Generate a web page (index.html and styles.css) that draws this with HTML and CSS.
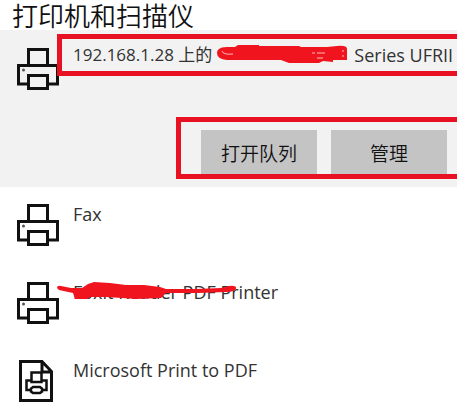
FILE: index.html
```
<!DOCTYPE html>
<html lang="zh-CN">
<head>
  <meta charset="UTF-8">
  <meta name="viewport" content="width=device-width, initial-scale=1.0">
  <title>打印机和扫描仪</title>
  <link rel="stylesheet" href="styles.css">
</head>
<body>
  <svg class="defs" aria-hidden="true">
    <symbol id="printer" viewBox="0 0 42 42">
      <path d="M11.5 17V1.5h19V17M11 36H1.5V17.5h39V36H31M11.5 27.5h19v13h-19z"/>
      <circle cx="6.500" cy="22" r="1.500" fill="#555" stroke="none"/>
    </symbol>
  </svg>

  <h1>打印机和扫描仪</h1>

  <ul class="devices">
    <li class="device selected">
      <svg class="icon"><use href="#printer"/></svg>
      <div class="details">
        <div class="mark name-mark">
          <span class="address">192.168.1.28 上的</span>
          <svg class="redacted" viewBox="0 0 132 20">
            <path class="ink" d="M2 4Q4 2 10 2L18 2 21 0H42V1H82L84 2H110L120 1Q130 0 130 4V15H116V17L106 16 102 18H72L64 15H10Q0 14 0 8Q0 5 2 4z"/>
            <path class="gap" d="M5 6Q6 10 16 9M95 8h3M100 8h8M100 13h6M126 5v2M126 10v2"/>
          </svg>
          <span>Series UFRII</span>
        </div>
        <div class="mark actions">
          <button type="button">打开队列</button>
          <button type="button">管理</button>
        </div>
      </div>
    </li>
    <li class="device">
      <svg class="icon"><use href="#printer"/></svg>
      <span class="name">Fax</span>
    </li>
    <li class="device">
      <svg class="icon"><use href="#printer"/></svg>
      <span class="name">Foxit Reader PDF Printer
        <svg class="scribble" viewBox="0 0 182 20">
          <path class="ink" d="M1 6Q1 3 5 4L15 6 26 6 32 2 38 0 54 1 70 3 88 3 104 5 110 7 140 7 165 6 173 4Q181 3 180 7Q178 10 170 10L142 11 110 11 105 16 80 17 66 16 50 15 34 15 32 17 19 17 17 11 3 8z"/>
        </svg>
      </span>
    </li>
    <li class="device">
      <svg class="icon" viewBox="0 0 42 42">
        <path d="M3.500 1.500H25L34.500 11.500V40.500H3.500zM25 1.500V12H35"/>
        <path stroke-width="2.500" d="M14.500 20V12.500H24.500V22H14.500zM14 30H9.500V20.500H14.500M24.500 20.500H29.500V30H25M16 27H23L25 28.500V31.500L23 33H16L14 31.500V28.500z"/>
      </svg>
      <span class="name">Microsoft Print to PDF</span>
    </li>
  </ul>
</body>
</html>
```
FILE: styles.css
```
body {
  margin: 0;
  background: #fff;
  color: #333;
  font-family: "Open Sans", "Noto Sans CJK SC", sans-serif;
  font-size: 18px;
  line-height: 24px;
}

.defs {
  display: none;
}

h1 {
  margin: 0;
  padding-left: 12px;
  font-family: "Noto Sans CJK SC", sans-serif;
  font-size: 26px;
  font-weight: 350;
  line-height: 30px;
  color: #111;
}

.devices {
  margin: 0;
  padding: 0 0 12px;
  list-style: none;
}

.device {
  display: flex;
  gap: 14px;
  min-height: 44px;
  padding: 17px 0 17px 17px;
}

.icon {
  flex: none;
  width: 42px;
  height: 42px;
  fill: none;
  stroke: #111;
  stroke-width: 3;
}

.name {
  position: relative;
  margin-top: -2px;
}

/* selected printer */
.selected {
  gap: 0;
  padding: 4px 0 8px 17px;
  background: #f2f2f2;
}

.selected .icon {
  margin: 14px -2px 0 0;
}

.details {
  flex: 1;
  display: flex;
  flex-direction: column;
  gap: 41px;
}

.mark {
  display: flex;
  border: 5px solid #e81123;
  border-right: none;
}

.name-mark {
  align-items: center;
  gap: 5px;
  padding: 4px 0 4px 11px;
  white-space: nowrap;
}

.address {
  font-size: 17px;
}

.redacted {
  width: 132px;
  height: 20px;
}

.actions {
  align-self: flex-end;
  gap: 14px;
  padding: 8px 10px 0 20px;
}

button {
  width: 116px;
  height: 44px;
  padding: 0;
  border: none;
  background: #c4c4c4;
  color: #111;
  font-family: "Noto Sans CJK SC", sans-serif;
  font-size: 19px;
  font-weight: 350;
}

/* red pen strokes */
.ink {
  fill: #f0141e;
}

.gap {
  fill: none;
  stroke: #fbb;
}

.scribble {
  position: absolute;
  left: -17px;
  top: 2px;
  width: 182px;
  height: 20px;
}
```
